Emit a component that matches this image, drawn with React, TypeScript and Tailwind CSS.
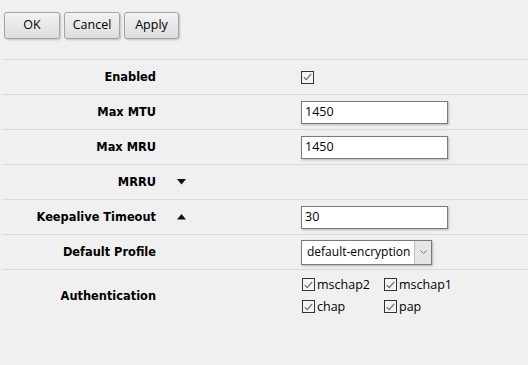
import React from 'react'

const labelFont = { fontFamily: '"DejaVu Sans", Verdana, sans-serif' }
const uiFont = { fontFamily: '"Open Sans", "Noto Sans", sans-serif' }

function Check({ size = 13 }: { size?: number }) {
  return (
    <span
      className="inline-flex shrink-0 items-center justify-center border border-[#333] bg-[#f4f4f4]"
      style={{ width: size, height: size }}
    >
      <svg width="9" height="8" viewBox="0 0 9 8">
        <path d="M0.8 4.2 L3.2 6.6 L8.2 0.8" fill="none" stroke="#6a6a6a" strokeWidth="1.2" />
      </svg>
    </span>
  )
}

function TextBox({ value }: { value: string }) {
  return (
    <div
      className="w-[147px] h-[23px] bg-white border border-[#7a7a7a] shadow-[1px_1px_2px_rgba(0,0,0,0.25)] flex items-center px-[3px] text-[12.5px] text-black"
      style={uiFont}
    >
      {value}
    </div>
  )
}

function Row({ label, arrow, children }: { label: string; arrow?: 'up' | 'down'; children?: React.ReactNode }) {
  return (
    <div className="flex items-center h-[35px] border-b border-[#dadada]">
      <div className="w-[154px] text-right text-[11.4px] font-bold text-black pt-[2px]" style={labelFont}>
        {label}
      </div>
      <div className="w-[145px] pl-[21px] flex items-center">
        {arrow === 'down' && (
          <svg width="9" height="6" viewBox="0 0 9 6"><path d="M0 0 H9 L4.5 5.5 Z" fill="#111" /></svg>
        )}
        {arrow === 'up' && (
          <svg width="9" height="6" viewBox="0 0 9 6"><path d="M0 5.5 H9 L4.5 0 Z" fill="#111" /></svg>
        )}
      </div>
      <div className="flex items-center">{children}</div>
    </div>
  )
}

function Btn({ children, w }: { children: React.ReactNode; w: string }) {
  return (
    <button
      className={`${w} h-[27px] rounded-[3px] border border-[#a3a3a3] bg-gradient-to-b from-[#f2f2f2] to-[#dedede] shadow-[1px_1px_2px_rgba(0,0,0,0.2)] text-[12.5px] text-black`}
      style={uiFont}
    >
      {children}
    </button>
  )
}

export default function App() {
  return (
    <div className="w-[528px] h-[365px] bg-[#f0f0f0] overflow-hidden">
      <div className="flex gap-[4px] pt-[12px] pl-[4px] h-[59px]">
        <Btn w="w-[56px]">OK</Btn>
        <Btn w="w-[56px]">Cancel</Btn>
        <Btn w="w-[55px]">Apply</Btn>
      </div>
      <div className="ml-[2px] border-t border-[#dadada]">
        <Row label="Enabled">
          <Check />
        </Row>
        <Row label="Max MTU">
          <TextBox value="1450" />
        </Row>
        <Row label="Max MRU">
          <TextBox value="1450" />
        </Row>
        <Row label="MRRU" arrow="down" />
        <Row label="Keepalive Timeout" arrow="up">
          <TextBox value="30" />
        </Row>
        <Row label="Default Profile">
          <div
            className="flex items-center h-[25px] bg-white border border-[#7a7a7a] shadow-[1px_1px_2px_rgba(0,0,0,0.25)] text-[12px] text-black"
            style={uiFont}
          >
            <span className="pl-[5px] pr-[4px]">default-encryption</span>
            <span className="w-[17px] h-full flex items-center justify-center bg-[#e6e6e6] border-l border-[#c0c0c0]">
              <svg width="7" height="4" viewBox="0 0 7 4"><path d="M0.5 0.5 L3.5 3.5 L6.5 0.5" fill="none" stroke="#777" strokeWidth="1" /></svg>
            </span>
          </div>
        </Row>
        <div className="flex h-[56px] items-start">
          <div className="w-[154px] h-[52px] pt-[2px] flex items-center justify-end text-[11.4px] font-bold text-black" style={labelFont}>
            Authentication
          </div>
          <div className="ml-[146px] pt-[8px] grid grid-cols-[82px_auto] content-start gap-y-[9px] text-[12.5px] text-black" style={uiFont}>
            <label className="flex items-center gap-[2px] h-[13px] leading-[13px]"><Check />mschap2</label>
            <label className="flex items-center gap-[2px] h-[13px] leading-[13px]"><Check />mschap1</label>
            <label className="flex items-center gap-[2px] h-[13px] leading-[13px]"><Check />chap</label>
            <label className="flex items-center gap-[2px] h-[13px] leading-[13px]"><Check />pap</label>
          </div>
        </div>
      </div>
    </div>
  )
}
